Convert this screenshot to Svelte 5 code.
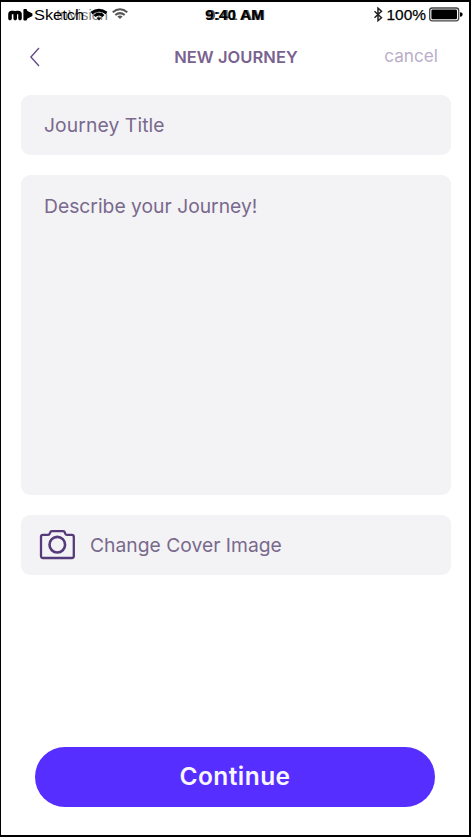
<script>
  let title = 'Journey Title';
  let description = 'Describe your Journey!';
</script>

<main class="screen">
  <div class="status">
    <svg width="468" height="26" viewBox="1 2 468 26" aria-label="Status bar">
      <g fill="none" stroke="#000" stroke-width="3.6" stroke-linecap="round">
        <path d="M10 18.6v-4.2q0-1.9 1.8-1.9h1.6q1.8 0 1.8 1.9v4.2M15.2 14.4q0-1.9 1.8-1.9h1q2 0 2 1.9v4.2" />
      </g>
      <rect x="23.4" y="9" width="3.6" height="11.5" rx="1" />
      <path d="M26.6 10.5l5.8 3v2.6l-5.8 3z" />
      <text x="56" y="20" textLength="52" lengthAdjust="spacingAndGlyphs" fill="#555" opacity=".75">InVision</text>
      <text x="34" y="20" textLength="50" lengthAdjust="spacingAndGlyphs">Sketch</text>
      <g fill="none" stroke="#000" stroke-width="3">
        <path d="M91.5 13Q99 7.4 106.5 13M94.5 16Q99 12 103.5 16" />
        <path d="M96.5 17.5h5L99 20.5z" fill="#000" stroke="none" />
      </g>
      <g fill="none" stroke="#555" stroke-width="2">
        <path d="M112.7 12.2Q120 6.2 127.3 12.2M115.3 15Q120 11.2 124.7 15" />
        <path d="M117.4 16.4Q120 14.7 122.6 16.4L120 19z" fill="#555" stroke="none" />
      </g>
      <text x="207" y="20" textLength="58" lengthAdjust="spacingAndGlyphs" class="time ghost">9:41 AM</text>
      <text x="205" y="20" textLength="59" lengthAdjust="spacingAndGlyphs" class="time">9:40 AM</text>
      <path d="M374.5 11.2l7 6.5-3.5 3V8.2l3.5 3-7 6.5" fill="none" stroke="#222" stroke-width="1.5" />
      <text x="386.5" y="20" textLength="39.5" lengthAdjust="spacingAndGlyphs" class="percent" stroke="#000" stroke-width=".25">100%</text>
      <rect x="429.7" y="8" width="29" height="12.8" rx="2.5" fill="#fff" stroke="#444" stroke-width="1.3" />
      <rect x="431.4" y="9.6" width="25.6" height="9.6" rx="1.2" />
      <path d="M460 12.2q2.6 0 2.6 2.3t-2.6 2.3z" />
    </svg>
  </div>

  <header>
    <button class="back" aria-label="Back">
      <svg width="12" height="20" viewBox="0 0 12 20"><path d="M10 1L1.9 10l8.1 9" fill="none" stroke="#654887" stroke-width="1.35" /></svg>
    </button>
    <h1>NEW JOURNEY</h1>
    <button class="cancel">cancel</button>
  </header>

  <section>
    <div class="field"><span class="title">{title}</span></div>
    <div class="field area"><span class="desc">{description}</span></div>
    <button class="field cover">
      <svg width="36" height="30" viewBox="0 0 36 30" fill="none" stroke="#553b79" stroke-width="2.3">
        <path d="M4 4.8h5q1.4 0 1.7-1.2l.4-1Q11.5 1.2 13 1.2h11q1.5 0 1.9 1.4l.3 1q.4 1.2 1.8 1.2h4.8q2 0 2 2V26q0 2-2 2H4q-2 0-2-2V6.8q0-2 2-2z" />
        <circle cx="18.3" cy="14.7" r="7.8" stroke-width="2.6" />
      </svg>
      <span class="change">Change Cover Image</span>
    </button>
  </section>

  <button class="continue"><span>Continue</span></button>
</main>

<style>
  :global(body) { margin: 0; background: #fff; }
  .screen {
    box-sizing: border-box;
    width: 471px;
    height: 837px;
    border: solid #000;
    border-width: 2px 2px 2px 1px;
    background: #fff;
    display: flex;
    flex-direction: column;
    overflow: hidden;
    font-family: Inter, sans-serif;
  }
  button { border: 0; margin: 0; padding: 0; background: none; font: inherit; }
  svg { display: block; flex: none; }
  .status { height: 26px; }
  .status text { font: 14.5px "Liberation Sans", sans-serif; }
  .status .time { font-weight: 700; font-size: 15px; }
  .status .ghost { fill: #555; }
  .status .percent { font-size: 15.5px; }
  header {
    height: 66.67px;
    box-sizing: border-box;
    padding: 0 31px 9px 28px;
    display: grid;
    grid-template-columns: 60px 1fr 60px;
    align-items: center;
  }
  .back { justify-self: start; }
  h1 { margin: 0 0 0 5px; text-align: center; color: #79628f; font-size: 16.5px; line-height: 20px; font-weight: 600; letter-spacing: .05px; white-space: nowrap; }
  .cancel { justify-self: end; color: #b9afc9; font-size: 17.2px; line-height: 20px; margin-top: -1px; }
  section { display: flex; flex-direction: column; gap: 20px; padding: 0 18px 0 20px; }
  .field {
    box-sizing: border-box;
    width: 430px;
    height: 60px;
    border-radius: 9px;
    background: #f3f3f6;
    color: #79698c;
    display: flex;
    align-items: center;
    padding: 0 22px 0 23px;
    font-size: 19.3px;
    line-height: 24px;
    white-space: nowrap;
  }
  .area { height: 320px; align-items: flex-start; padding-top: 19.7px; }
  .cover { padding: 0 18px; gap: 15px; }
  .title { letter-spacing: .1px; }
  .continue {
    width: 400px;
    height: 60px;
    margin: 172.33px 0 0 34px;
    padding-bottom: 2px;
    border-radius: 30px;
    background: #562eff;
    color: #f8f6ff;
    font-size: 24.5px;
    font-weight: 600;
    letter-spacing: .45px;
  }
</style>
